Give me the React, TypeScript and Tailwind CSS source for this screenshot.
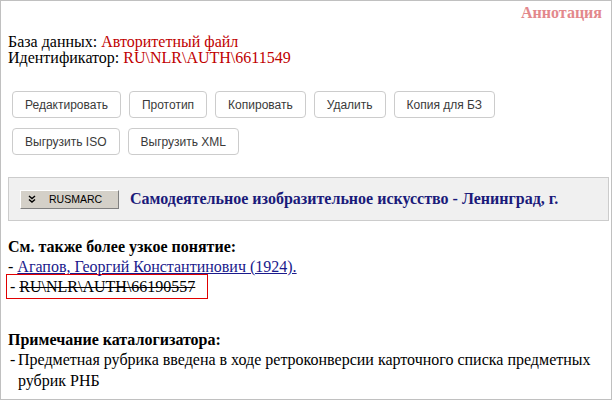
import React from 'react';

const buttonsRow1 = ['Редактировать', 'Прототип', 'Копировать', 'Удалить', 'Копия для БЗ'];
const buttonsRow2 = ['Выгрузить ISO', 'Выгрузить XML'];

const ActionButton = ({ label }: { label: string }) => (
  <button className="h-[27px] px-[12px] bg-white border border-[#cccccc] rounded-[4px] text-[12px] text-[#3a3a3a] font-['Liberation_Sans',Arial,sans-serif] leading-none">
    {label}
  </button>
);

export default function App() {
  return (
    <div className="w-[612px] h-[400px] border border-[#c0c0c0] bg-white font-['Liberation_Serif','Times_New_Roman',serif] text-[16px] leading-[16px] text-black overflow-hidden">
      {/* Header */}
      <div className="flex justify-end pr-[9px] pt-[4px]">
        <span className="font-bold text-[#e3888c]">Аннотация</span>
      </div>

      <div className="pl-[7px] pt-[13px]">
        <div>
          База данных: <span className="text-[#c00000]">Авторитетный файл</span>
        </div>
        <div>
          Идентификатор: <span className="text-[#c00000]">RU\NLR\AUTH\6611549</span>
        </div>
      </div>

      {/* Actions */}
      <div className="pl-[11px] pt-[25px] flex flex-col gap-[10px]">
        <div className="flex gap-[8px]">
          {buttonsRow1.map((b) => (
            <ActionButton key={b} label={b} />
          ))}
        </div>
        <div className="flex gap-[8px]">
          {buttonsRow2.map((b) => (
            <ActionButton key={b} label={b} />
          ))}
        </div>
      </div>

      {/* Heading panel */}
      <div className="ml-[7px] mr-[2px] mt-[22px] h-[44px] bg-[#f0f0f0] border border-[#cccccc] flex items-center pl-[11px]">
        <button className="w-[99px] h-[19px] bg-[#d4d0c8] border border-t-white border-l-white border-b-[#808080] border-r-[#808080] flex items-center pl-[7px] gap-[13px] text-[10.5px] text-black font-['Liberation_Sans',Tahoma,sans-serif]">
          <svg width="8" height="8" viewBox="0 0 8 8" fill="none" stroke="black" strokeWidth="1.4">
            <path d="M1 1 L4 3.5 L7 1" />
            <path d="M1 4.5 L4 7 L7 4.5" />
          </svg>
          <span>RUSMARC</span>
        </button>
        <span className="ml-[11px] font-bold text-[#1a1a7a]">
          Самодеятельное изобразительное искусство - Ленинград, г.
        </span>
      </div>

      {/* Narrower terms */}
      <div className="pl-[7px] pt-[16px]">
        <div className="font-bold leading-[20px]">См. также более узкое понятие:</div>
        <div className="leading-[20px]">
          - <span className="text-[#1a1a8c] underline">Агапов, Георгий Константинович (1924).</span>
        </div>
        <div className="w-[202px] h-[25px] -ml-[2px] -mt-[3px] border border-[#e00000] flex items-center pl-[3px]">
          - <span className="ml-[4px] line-through">RU\NLR\AUTH\66190557</span>
        </div>
      </div>

      {/* Cataloguer note */}
      <div className="pl-[7px] pt-[32px]">
        <div className="font-bold leading-[18px]">Примечание каталогизатора:</div>
        <div className="flex leading-[21px] pr-[10px]">
          <span className="w-[10px] shrink-0 pl-[2px]">-</span>
          <span>Предметная рубрика введена в ходе ретроконверсии карточного списка предметных рубрик РНБ</span>
        </div>
      </div>
    </div>
  );
}
